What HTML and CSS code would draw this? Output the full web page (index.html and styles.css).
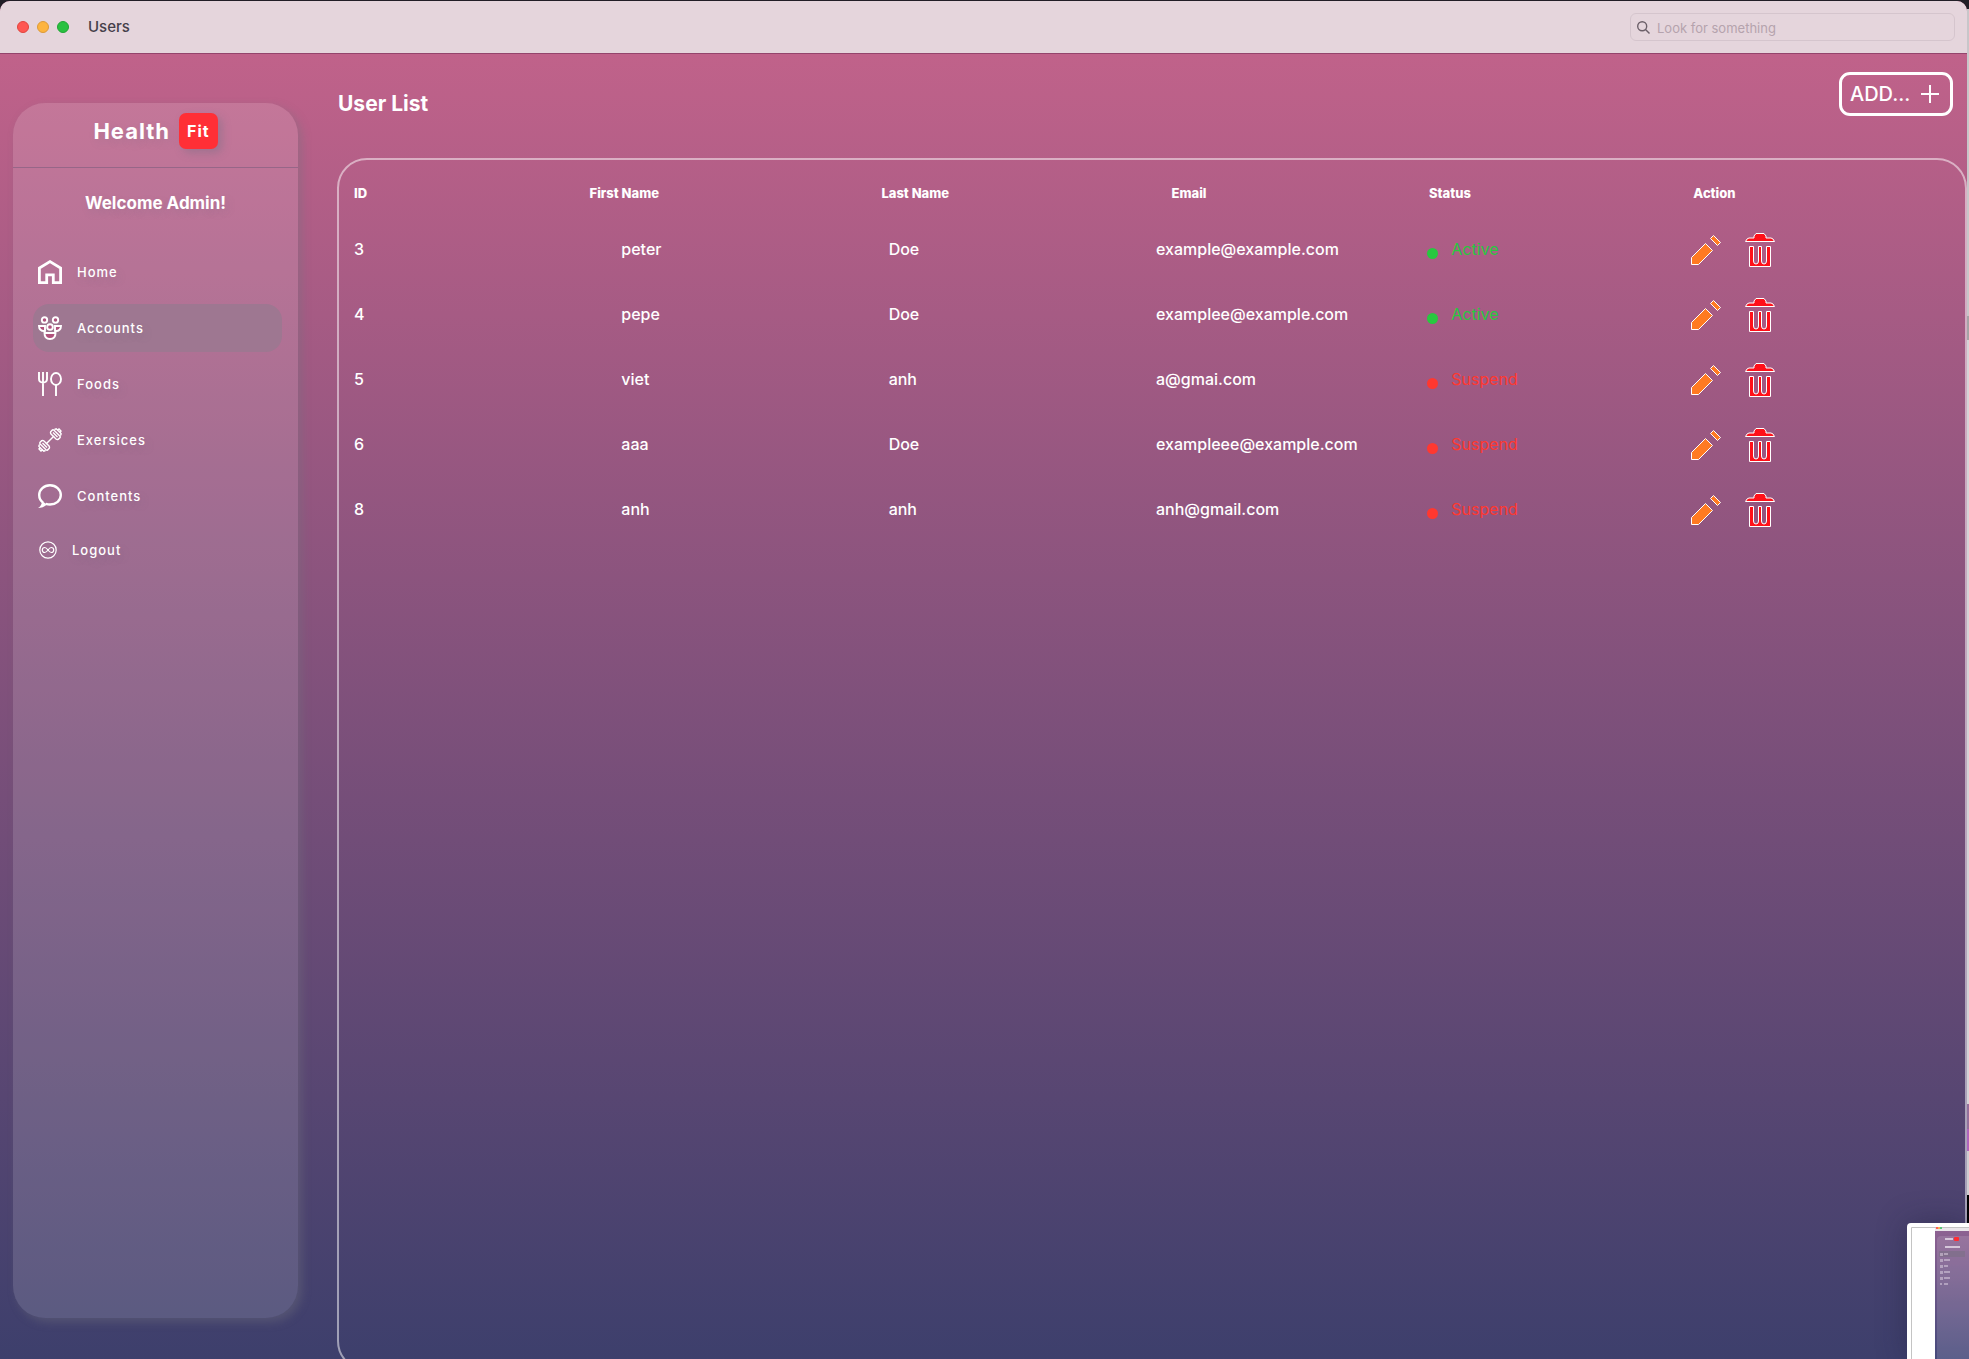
FILE: index.html
```html
<!DOCTYPE html>
<html lang="en">
<head>
<meta charset="utf-8">
<title>Users</title>
<link rel="stylesheet" href="styles.css">
</head>
<body>
<svg class="defs" aria-hidden="true">
  <symbol id="pencil" viewBox="0 0 30 30">
    <path d="M.5 22.500 14.500 8.500 21.500 15.500 7.500 29.500H.5Z"/>
    <path d="M19.500 3.500 22.500.5 29.500 7.500 26.500 10.500Z"/>
  </symbol>
  <symbol id="trash" viewBox="0 0 30 34">
    <path d="M.5 8.500 2 6 4 5H9V3L11 .5H19L21 3V5H26L28 6 29.500 8.500Z"/>
    <path d="M4.500 13.500H8.500V28Q8.500 31 11 31T13.500 28V13.500H16.500V28Q16.500 31 19 31T21.500 28V13.500H25.500V33.500H4.500Z"/>
  </symbol>
</svg>
<div class="window">
  <header class="titlebar">
    <span class="light light-close"></span>
    <span class="light light-min"></span>
    <span class="light light-max"></span>
    <span class="window-title">Users</span>
    <label class="search">
      <svg width="13" height="13" viewBox="0 0 13 13" fill="none" stroke="#6b5f68" stroke-width="1.400" aria-hidden="true"><circle cx="5.200" cy="5.200" r="4.500"/><path d="m8.500 8.500 4 4"/></svg>
      <input type="text" placeholder="Look for something" aria-label="Search">
    </label>
  </header>
  <div class="content">
    <aside class="sidebar">
      <div class="brand"><span>Health</span><span class="brand-badge">Fit</span></div>
      <p class="welcome">Welcome Admin!</p>
      <nav class="nav">
        <a href="#home"><svg width="24" height="24" viewBox="0 0 24 24" stroke-width="2.800"><path d="M1.400 22.600V8L12 1.600 22.600 8V22.600H15.300V14.800H8.700V22.600Z"/></svg>Home</a>
        <a href="#accounts" class="active"><svg width="24" height="24" viewBox="0 0 24 24" stroke-width="1.900"><g fill="#b0527d"><path d="M1 10H7V15C3 15.500 1 13 1 10ZM23 10H17V15C21 15.500 23 13 23 10Z"/><circle cx="6.500" cy="3.900" r="2.700"/><circle cx="17.500" cy="3.900" r="2.700"/><path d="M6.500 17H17.500Q17.500 23 12 23T6.500 17Z"/><circle cx="12" cy="11" r="2.800"/></g></svg>Accounts</a>
        <a href="#foods"><svg width="24" height="24" viewBox="0 0 24 24" stroke-width="1.900"><path d="M1 0V7Q1 10.500 5 10.500T9 7V0M5 0V24M18 13V24"/><ellipse cx="18" cy="7" rx="5" ry="6"/></svg>Foods</a>
        <a href="#exercises"><svg width="24" height="24" viewBox="0 0 24 24" stroke-width="1.400"><path d="M8 16 16 8"/><g id="plate"><path d="M12.700 3.700 14.500 1.900Q15.200 1.500 16 2.200L21.800 8Q22.500 8.800 22.100 9.500L20.300 11.300Q19 11.800 18 11L13 6Q12.200 4.800 12.700 3.700ZM15 4.500 19.500 9M16.500 1.500 18.200.8 19.500 2 21 1 23 3 22 4.500 23.200 5.800 22.500 7.500M19.500 2 22 4.500"/></g><use href="#plate" transform="rotate(180 12 12)"/></svg>Exersices</a>
        <a href="#contents"><svg width="24" height="24" viewBox="0 0 24 24" stroke-width="2.400"><path d="M5 18.500C2.500 16.700 1.200 14 1.200 11 1.200 5.500 6 1.200 12 1.200S22.800 5.500 22.800 11 18 20.500 12 20.500C10.500 20.500 9 20.200 7.700 19.800"/><path stroke="none" fill="#fff" d="M4 17 9 20.500Q5 24 0 24 4 21.500 4 17Z"/></svg>Contents</a>
        <a href="#logout" class="logout"><svg width="18" height="18" viewBox="0 0 18 18" stroke-width="1.200"><circle cx="9" cy="9" r="8.200"/><path d="M9 9C7.500 7 6.700 6.500 5.800 6.500A2.500 2.500 0 0 0 5.800 11.500C6.700 11.500 7.500 11 9 9S11.300 6.500 12.200 6.500A2.500 2.500 0 0 1 12.200 11.500C11.300 11.500 10.500 11 9 9Z"/></svg>Logout</a>
      </nav>
    </aside>
    <main class="main">
      <div class="toolbar">
        <h1>User List</h1>
        <button class="add" type="button">ADD...<svg width="18" height="18" viewBox="0 0 18 18" fill="none" stroke="#fff" stroke-width="2" aria-hidden="true"><path d="M9 0V18M0 9H18"/></svg></button>
      </div>
      <section class="panel">
        <table class="users">
          <thead>
            <tr><th>ID</th><th>First Name</th><th>Last Name</th><th>Email</th><th>Status</th><th>Action</th></tr>
          </thead>
          <tbody>
            <tr><td>3</td><td>peter</td><td>Doe</td><td>example@example.com</td><td class="status is-active">Active</td><td class="actions"><button type="button" aria-label="Edit"><svg class="pencil" width="30" height="30"><use href="#pencil"/></svg></button><button type="button" aria-label="Delete"><svg class="trash" width="30" height="34"><use href="#trash"/></svg></button></td></tr>
            <tr><td>4</td><td>pepe</td><td>Doe</td><td>examplee@example.com</td><td class="status is-active">Active</td><td class="actions"><button type="button" aria-label="Edit"><svg class="pencil" width="30" height="30"><use href="#pencil"/></svg></button><button type="button" aria-label="Delete"><svg class="trash" width="30" height="34"><use href="#trash"/></svg></button></td></tr>
            <tr><td>5</td><td>viet</td><td>anh</td><td>a@gmai.com</td><td class="status is-suspended">Suspend</td><td class="actions"><button type="button" aria-label="Edit"><svg class="pencil" width="30" height="30"><use href="#pencil"/></svg></button><button type="button" aria-label="Delete"><svg class="trash" width="30" height="34"><use href="#trash"/></svg></button></td></tr>
            <tr><td>6</td><td>aaa</td><td>Doe</td><td>exampleee@example.com</td><td class="status is-suspended">Suspend</td><td class="actions"><button type="button" aria-label="Edit"><svg class="pencil" width="30" height="30"><use href="#pencil"/></svg></button><button type="button" aria-label="Delete"><svg class="trash" width="30" height="34"><use href="#trash"/></svg></button></td></tr>
            <tr><td>8</td><td>anh</td><td>anh</td><td>anh@gmail.com</td><td class="status is-suspended">Suspend</td><td class="actions"><button type="button" aria-label="Edit"><svg class="pencil" width="30" height="30"><use href="#pencil"/></svg></button><button type="button" aria-label="Delete"><svg class="trash" width="30" height="34"><use href="#trash"/></svg></button></td></tr>
          </tbody>
        </table>
      </section>
    </main>
  </div>
</div>
<div class="thumbnail" aria-hidden="true">
  <svg width="58" height="132" viewBox="0 0 58 132">
    <defs><linearGradient id="mini" x1="0" y1="0" x2="0" y2="1"><stop offset="0" stop-color="#8d6292"/><stop offset="1" stop-color="#45497b"/></linearGradient></defs>
    <path d="M.5 132V.5H58" fill="none" stroke="#c4c4c4"/>
    <path fill="#eae6ea" d="M24 1H58V4H24Z"/>
    <path fill="#ff5f57" d="M25 0H27V2H25Z"/><path fill="#f4b850" d="M27 0H29V2H27Z"/><path fill="#5ac878" d="M29 0H31V2H29Z"/>
    <path fill="url(#mini)" d="M24 4H58V132H24Z"/>
    <rect x="26" y="9" width="40" height="140" rx="4" fill="#fff" opacity=".12"/>
    <path fill="#83708e" d="M28 24H54V30H28Z"/>
    <g fill="#e6dbe9" opacity=".8"><path d="M34 11h8v2h-8ZM34 19h15v2h-15Z"/><path opacity=".6" d="M29 26h3v3h-3ZM33 26h4v2h-4ZM29 32h3v3h-3ZM33 32h6v2h-6ZM29 38h3v3h-3ZM33 38h4v2h-4ZM29 44h3v3h-3ZM33 44h6v2h-6ZM29 50h3v3h-3ZM33 50h6v2h-6ZM29 56h2v2h-2ZM33 56h4v2h-4Z"/></g>
    <rect x="43" y="10" width="5" height="4" rx="1" fill="#ff2d33"/>
  </svg>
</div>
</body>
</html>
```
FILE: styles.css
```css
* { box-sizing: border-box; }

html, body { height: 100%; }

body {
  margin: 0;
  padding: 1px 2px 0 0;
  overflow: hidden;
  position: relative;
  color: #fff;
  font: 16px/20px Inter, "Liberation Sans", sans-serif;
  background: linear-gradient(#111 9px, #c8c6c9 9px, #c8c6c9 316px, #a5a3a6 316px, #a5a3a6 340px, #d6d4d7 340px, #d6d4d7 1104px, #94709c 1104px, #94709c 1129px, #b064bd 1129px, #b064bd 1151px, #d0ced1 1151px, #d0ced1 1195px, #000 1195px);
}

body::before {
  content: "";
  position: absolute;
  inset: 0 0 auto;
  height: 9px;
  background: #211e26;
}

.defs { position: absolute; width: 0; height: 0; }

.window {
  position: relative;
  height: 100%;
  display: flex;
  flex-direction: column;
  border-radius: 10px 10px 0 0;
  overflow: hidden;
  background: linear-gradient(#c0628a 53px, #3d3f6c);
}

.titlebar {
  flex: none;
  height: 53px;
  padding: 0 12px 0 17px;
  display: flex;
  align-items: center;
  gap: 8px;
  background: #e5d5dc;
  border-bottom: 1px solid #94446c;
}

.light { width: 12px; height: 12px; border-radius: 50%; border: 1px solid #e0443e; background: #ff5752; }
.light-min { background: #fdb43f; border-color: #dc9a38; }
.light-max { background: #29c140; border-color: #20a534; }

.window-title { margin-left: 11px; font-size: 15px; font-weight: 500; color: #45404a; }

.search {
  margin-left: auto;
  width: 325px;
  height: 28px;
  padding: 0 6px;
  display: flex;
  align-items: center;
  gap: 7px;
  border: 1px solid #d5c5cd;
  border-radius: 6px;
}

.search input {
  flex: 1;
  min-width: 0;
  padding: 2px 0 0;
  border: 0;
  outline: 0;
  background: none;
  font: 13px/18px Inter, "Liberation Sans", sans-serif;
  color: #45404a;
}

.search input::placeholder { color: #b5a3ad; opacity: 1; }

.content { flex: 1; min-height: 0; display: flex; }

.sidebar {
  flex: none;
  width: 285px;
  margin: 49px 39px 41px 13px;
  border-radius: 32px;
  background: rgba(255, 255, 255, .14);
  box-shadow: 4px 4px 10px rgba(115, 115, 125, .4);
  text-shadow: 3px 4px 8px rgba(110, 110, 130, .2);
}

.brand {
  height: 65px;
  padding: 10px 0 0;
  display: flex;
  justify-content: center;
  align-items: flex-start;
  gap: 9px;
  border-bottom: 1px solid #976688;
  font-size: 22px;
  line-height: 36px;
  font-weight: 700;
  letter-spacing: 1px;
}

.brand-badge {
  padding: 0 8px;
  border-radius: 7px;
  background: #ff2f36;
  box-shadow: 4px 4px 8px rgba(110, 110, 130, .4);
  font-size: 16px;
  text-shadow: none;
}

.welcome { margin: 24px 0 34px; text-align: center; font-size: 17px; line-height: 22px; font-weight: 700; }

.nav { display: flex; flex-direction: column; gap: 8px; padding: 0 16px 0 20px; }

.nav a {
  height: 48px;
  padding-left: 5px;
  display: flex;
  align-items: center;
  gap: 15px;
  border-radius: 16px;
  color: #fff;
  text-decoration: none;
  font-size: 13px;
  font-weight: 500;
  letter-spacing: 1px;
}

.nav svg { flex: none; fill: none; stroke: #fff; }
.nav .active { background: #9e7791; }
.nav .logout { height: 44px; padding-left: 6px; }

.main { flex: 1; min-width: 0; display: flex; flex-direction: column; }

.toolbar {
  flex: none;
  height: 104px;
  padding: 18px 14px 0 1px;
  display: flex;
  justify-content: space-between;
  align-items: flex-start;
}

h1 { margin: 20px 0 0; font-size: 21px; line-height: 24px; font-weight: 700; }

.add {
  width: 114px;
  height: 44px;
  padding: 0 11px 0 8px;
  display: flex;
  align-items: center;
  justify-content: space-between;
  border: 3px solid #fff;
  border-radius: 11px;
  background: none;
  color: #fff;
  font: 500 20px/24px Inter, "Liberation Sans", sans-serif;
}

.panel {
  flex: 1;
  margin-bottom: -12px;
  padding: 16px 7px 0 15px;
  border: 2px solid rgba(255, 255, 255, .5);
  border-radius: 30px;
}

.users, .users thead, .users tbody { display: block; }

.users thead tr { height: 34px; display: flex; align-items: center; }
.users th { flex: 1 1 auto; padding: 0; text-align: left; font-size: 13px; line-height: 16px; font-weight: 800; }

.users tbody { padding-top: 7px; }
.users tbody tr { height: 65px; display: grid; grid-template-columns: repeat(6, minmax(0, 1fr)); align-items: center; }
.users td { padding: 0 0 2px; font-weight: 500; }

.status { display: flex; gap: 13px; }
.status::before { content: ""; width: 11px; height: 11px; margin: 9px 0 0 4px; border-radius: 50%; background: currentColor; }
.users .status { font-weight: 400; }
.is-active { color: #28c840; }
.is-suspended { color: #ff3830; }

.users .actions { display: flex; align-items: center; gap: 24px; padding: 0; }
.actions button { display: flex; padding: 0; border: 0; background: none; }
.actions svg { stroke: #fff; stroke-width: 1px; }
.pencil { fill: #ff7a22; }
.trash { fill: #ff1019; }

.thumbnail {
  position: absolute;
  right: 0;
  bottom: 0;
  width: 62px;
  height: 136px;
  padding: 4px 0 0 4px;
  border-radius: 4px 0 0 0;
  overflow: hidden;
  background: #fff;
  box-shadow: 0 0 30px rgba(30, 30, 60, .4);
}

.thumbnail svg { display: block; }
```
